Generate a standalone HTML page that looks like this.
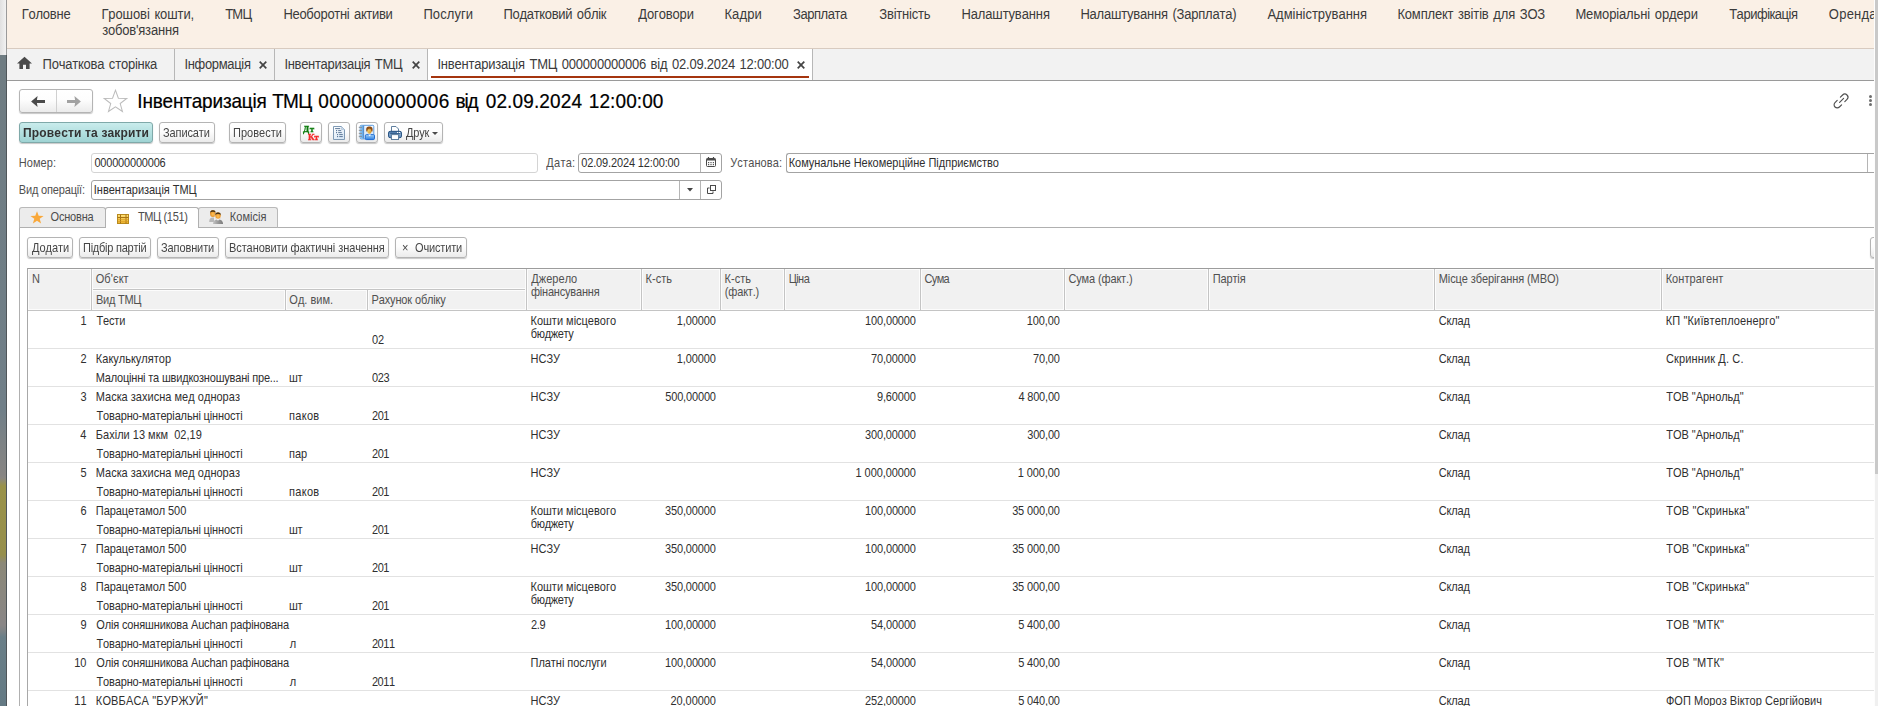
<!DOCTYPE html><html lang="uk"><head><meta charset="utf-8"><title>Інвентаризація ТМЦ</title><style>
*{box-sizing:border-box;margin:0;padding:0}
html,body{width:1878px;height:706px;overflow:hidden;background:#fff}
body{position:relative;font-family:"Liberation Sans",sans-serif;font-size:11px;color:#333;line-height:1}
.a{position:absolute}
.t{position:absolute;white-space:pre;line-height:1;font-kerning:none;transform-origin:0 84.65%;transform:scaleY(1.19)}
.m{font-size:13px;color:#3b3b3b;transform:scaleY(1.06);word-spacing:1.2px}
.c{font-size:11px;color:#2f2f2f}
.h{font-size:11px;color:#505050}
.b{font-size:11px;color:#4c4c4c}
.g{will-change:transform;color:#454545}
.btn{position:absolute;height:21px;border:1px solid #b4b4b4;border-radius:3px;background:linear-gradient(#ffffff 0%,#fdfdfd 45%,#ebebeb 100%);box-shadow:0 1px 1px rgba(0,0,0,.22)}
.inp{position:absolute;height:20px;border:1px solid #a3a3a3;border-radius:3px;background:#fff}
.hl{position:absolute;height:1px;background:#e2e2e2;left:28px;width:1846px}
</style></head><body>
<div class="a" style="left:0px;top:0px;width:6px;height:55px;background:linear-gradient(90deg,#e0e0e0,#f2f2f2)"></div>
<div class="a" style="left:0px;top:55px;width:6px;height:651px;background:linear-gradient(180deg,#6f7c82 0px,#707f88 355px,#7c8285 385px,#878583 420px,#8a8782 423px,#999249 431px,#968f4c 500px,#8b8878 508px,#898686 570px,#7d8386 576px,#6a7f88 582px,#647a84 651px)"></div>
<div class="a" style="left:6px;top:0px;width:1px;height:55px;background:#9a9a9a"></div>
<div class="a" style="left:6px;top:55px;width:1px;height:651px;background:#50565a"></div>
<div class="a" style="left:1875px;top:0px;width:3px;height:474px;background:#c9c9c9"></div>
<div class="a" style="left:1875px;top:474px;width:3px;height:232px;background:#f0f0f0"></div>
<div class="a" style="left:1874px;top:0px;width:1px;height:706px;background:#fdfdfd"></div>
<div class="a" style="left:7px;top:0px;width:1867px;height:48px;background:#faf0e6"></div>
<div class="a" style="left:7px;top:48px;width:1867px;height:1px;background:#d8cbc0"></div>
<div class="a" style="left:0;top:0;width:1874px;height:48px;overflow:hidden">
<span class="t m" style="left:21.78px;top:8.00px;letter-spacing:-0.259px;">Головне</span>
<span class="t m" style="left:101.38px;top:8.00px;letter-spacing:-0.085px;">Грошові кошти,</span>
<span class="t m" style="left:225.16px;top:8.00px;letter-spacing:-0.727px;">ТМЦ</span>
<span class="t m" style="left:283.38px;top:8.00px;letter-spacing:-0.291px;">Необоротні активи</span>
<span class="t m" style="left:423.40px;top:8.00px;letter-spacing:0.082px;">Послуги</span>
<span class="t m" style="left:503.40px;top:8.00px;letter-spacing:-0.283px;">Податковий облік</span>
<span class="t m" style="left:638.35px;top:8.00px;letter-spacing:-0.148px;">Договори</span>
<span class="t m" style="left:724.38px;top:8.00px;letter-spacing:0.147px;">Кадри</span>
<span class="t m" style="left:793.02px;top:8.00px;letter-spacing:-0.461px;">Зарплата</span>
<span class="t m" style="left:879.32px;top:8.00px;letter-spacing:-0.205px;">Звітність</span>
<span class="t m" style="left:961.38px;top:8.00px;letter-spacing:-0.117px;">Налаштування</span>
<span class="t m" style="left:1080.38px;top:8.00px;letter-spacing:-0.200px;">Налаштування (Зарплата)</span>
<span class="t m" style="left:1267.42px;top:8.00px;letter-spacing:-0.017px;">Адміністрування</span>
<span class="t m" style="left:1397.38px;top:8.00px;letter-spacing:-0.154px;">Комплект звітів для ЗОЗ</span>
<span class="t m" style="left:1575.38px;top:8.00px;letter-spacing:-0.118px;">Меморіальні ордери</span>
<span class="t m" style="left:1729.16px;top:8.00px;letter-spacing:-0.474px;">Тарифікація</span>
<span class="t m" style="left:1828.83px;top:8.00px;letter-spacing:0.230px;">Оренда</span>
<span class="t m" style="left:102.14px;top:24.00px;letter-spacing:-0.188px;">зобов'язання</span>
</div>
<div class="a" style="left:7px;top:49px;width:1867px;height:31px;background:#f2f2f2"></div>
<div class="a" style="left:7px;top:80px;width:1867px;height:1px;background:#9a9a9a"></div>
<div class="a" style="left:428px;top:49px;width:384px;height:31px;background:#fff"></div>
<div class="a" style="left:174px;top:49px;width:1px;height:31px;background:#b7b7b7"></div>
<div class="a" style="left:274px;top:49px;width:1px;height:31px;background:#b7b7b7"></div>
<div class="a" style="left:427px;top:49px;width:1px;height:31px;background:#b7b7b7"></div>
<div class="a" style="left:812px;top:49px;width:1px;height:31px;background:#b7b7b7"></div>
<div class="a" style="left:431px;top:76px;width:378px;height:2px;background:#a5350f"></div>
<svg class="a" style="left:16px;top:56px" width="17" height="14" viewBox="0 0 17 14"><path d="M8.5 0.8 L16 7.5 H13.6 V13 H10 V8.8 H7 V13 H3.4 V7.5 H1 Z" fill="#4a4a4a"/></svg>
<span class="t m" style="left:42.60px;top:58.00px;letter-spacing:-0.214px;">Початкова сторінка</span>
<span class="t m" style="left:184.45px;top:58.00px;letter-spacing:-0.332px;">Інформація</span>
<span class="t m" style="left:284.45px;top:58.00px;letter-spacing:-0.318px;">Інвентаризація ТМЦ</span>
<span class="t m" style="left:437.45px;top:58.00px;letter-spacing:-0.211px;">Інвентаризація ТМЦ 000000000006 від 02.09.2024 12:00:00</span>
<svg class="a" style="left:257.6px;top:60.2px" width="10" height="10" viewBox="0 0 10 10"><path d="M1.7 1.7 L8.3 8.3 M8.3 1.7 L1.7 8.3" stroke="#444" stroke-width="1.7" fill="none"/></svg>
<svg class="a" style="left:410.5px;top:60.2px" width="10" height="10" viewBox="0 0 10 10"><path d="M1.7 1.7 L8.3 8.3 M8.3 1.7 L1.7 8.3" stroke="#444" stroke-width="1.7" fill="none"/></svg>
<svg class="a" style="left:795.6px;top:60.2px" width="10" height="10" viewBox="0 0 10 10"><path d="M1.7 1.7 L8.3 8.3 M8.3 1.7 L1.7 8.3" stroke="#444" stroke-width="1.7" fill="none"/></svg>
<div class="btn" style="left:19px;top:89px;width:74px;height:24px"></div>
<div class="a" style="left:56px;top:90px;width:1px;height:22px;background:#d0d0d0"></div>
<svg class="a" style="left:30px;top:95px" width="16" height="13" viewBox="0 0 16 13"><path d="M1.1 6.5 L7.6 1.1 L6.9 5 H15 V8 H6.9 L7.6 11.9 Z" fill="#4a4a4a"/></svg>
<svg class="a" style="left:66px;top:95px" width="16" height="13" viewBox="0 0 16 13"><path d="M14.9 6.5 L8.4 1.1 L9.1 5 H1 V8 H9.1 L8.4 11.9 Z" fill="#a2a2a2"/></svg>
<svg class="a" style="left:102.1px;top:88.3px" width="28" height="27" viewBox="0 0 26 25"><path d="M12.5 2 L15.2 9.4 L23 9.6 L16.9 14.4 L19 21.8 L12.5 17.5 L6 21.8 L8.1 14.4 L2 9.6 L9.8 9.4 Z" fill="#fff" stroke="#bcbcbc" stroke-width="0.95" stroke-linejoin="miter"/></svg>
<span class="t c" style="left:137.30px;top:91.92px;font-size:19px;letter-spacing:-0.198px;color:#000;transform:scaleY(1.07);-webkit-text-stroke:0.2px #000;">Інвентаризація </span>
<span class="t c" style="left:272.32px;top:91.92px;font-size:19px;letter-spacing:-0.804px;color:#000;transform:scaleY(1.07);-webkit-text-stroke:0.2px #000;">ТМЦ </span>
<span class="t c" style="left:318.31px;top:91.92px;font-size:19px;letter-spacing:0.379px;color:#000;transform:scaleY(1.07);-webkit-text-stroke:0.2px #000;">000000000006 </span>
<span class="t c" style="left:455.53px;top:91.92px;font-size:19px;letter-spacing:-1.130px;color:#000;transform:scaleY(1.07);-webkit-text-stroke:0.2px #000;">від </span>
<span class="t c" style="left:485.71px;top:91.92px;font-size:19px;letter-spacing:0.134px;color:#000;transform:scaleY(1.07);-webkit-text-stroke:0.2px #000;">02.09.2024 </span>
<span class="t c" style="left:588.80px;top:91.92px;font-size:19px;letter-spacing:0.090px;color:#000;transform:scaleY(1.07);-webkit-text-stroke:0.2px #000;">12:00:00</span>
<svg class="a" style="left:1830.5px;top:90.5px" width="20" height="20" viewBox="0 0 20 20"><g fill="none" stroke="#4f4f4f" stroke-width="1.15" stroke-linecap="round"><path d="M8.6 11.4 L12.6 7.4"/><path d="M9.4 6.2 L11.6 4 a3.1 3.1 0 0 1 4.4 4.4 L13.8 10.6"/><path d="M10.6 13.8 L8.4 16 a3.1 3.1 0 0 1 -4.4 -4.4 L6.2 9.4"/></g></svg>
<div class="a" style="left:1869px;top:95px;width:3px;height:3px;background:#6e6e6e;border-radius:1.5px"></div>
<div class="a" style="left:1869px;top:99px;width:3px;height:3px;background:#6e6e6e;border-radius:1.5px"></div>
<div class="a" style="left:1869px;top:103px;width:3px;height:3px;background:#6e6e6e;border-radius:1.5px"></div>
<div class="btn" style="left:19px;top:122px;width:134px;height:21px;border-color:#7fa9a9;background:linear-gradient(#c9ecec 0%,#b4e0e0 50%,#9fd3d3 100%)"></div>
<span class="t b g" style="left:23.35px;top:126.84px;font-size:12px;font-weight:bold;letter-spacing:0.158px;color:#333;transform:none;">Провести та закрити</span>
<div class="btn" style="left:159px;top:122px;width:56px"></div>
<span class="t b g" style="left:163.39px;top:127.69px;letter-spacing:-0.106px;">Записати</span>
<div class="btn" style="left:229px;top:122px;width:57px"></div>
<span class="t b g" style="left:232.86px;top:127.69px;letter-spacing:0.024px;">Провести</span>
<div class="btn" style="left:300px;top:122px;width:22px"></div>
<span class="t c" style="left:303.20px;top:124.78px;font-size:9px;font-weight:bold;letter-spacing:0.450px;color:#0b7a0b;font-family:'Liberation Serif',serif;transform:none;will-change:transform;-webkit-text-stroke:0.35px currentColor;">Дт</span>
<span class="t c" style="left:307.90px;top:132.78px;font-size:9px;font-weight:bold;letter-spacing:-0.383px;color:#f52a2a;font-family:'Liberation Serif',serif;transform:none;will-change:transform;-webkit-text-stroke:0.35px currentColor;">Кт</span>
<div class="btn" style="left:328px;top:122px;width:22px"></div>
<svg class="a" style="left:333px;top:126px" width="12" height="14" viewBox="0 0 12 14"><defs><linearGradient id="dg" x1="0" y1="0" x2="0.6" y2="1"><stop offset="0" stop-color="#ffffff"/><stop offset="1" stop-color="#d9e8f6"/></linearGradient></defs><path d="M0.5 0.5 H8.5 L11.5 3.5 V13.5 H0.5 Z" fill="url(#dg)" stroke="#7f9ab5"/><path d="M8.5 0.5 V3.5 H11.5 Z" fill="#c9d8e8" stroke="#a9bdd3" stroke-width="0.6"/><path d="M2.5 2.6 H6.8 M5.6 4.6 H7.8 M5.6 6.6 H8.4 M6.6 8.6 H9.4 M6.6 10.6 H9.4" stroke="#4f6b8c" stroke-width="0.9" stroke-linecap="round"/><g fill="#3f6186"><circle cx="3.6" cy="4.6" r="0.6"/><circle cx="3.6" cy="6.6" r="0.6"/><circle cx="4.6" cy="8.6" r="0.6"/><circle cx="4.6" cy="10.6" r="0.6"/></g></svg>
<div class="btn" style="left:356px;top:122px;width:22px"></div>
<svg class="a" style="left:358px;top:124px" width="18" height="17" viewBox="0 0 18 17"><defs><linearGradient id="bk" x1="0" y1="0" x2="1" y2="0"><stop offset="0" stop-color="#8cc4f0"/><stop offset="1" stop-color="#5aa0e0"/></linearGradient><linearGradient id="sh" x1="0" y1="0" x2="0" y2="1"><stop offset="0" stop-color="#9fd0f8"/><stop offset="1" stop-color="#2f7fe0"/></linearGradient><linearGradient id="fc" x1="0" y1="0" x2="1" y2="1"><stop offset="0" stop-color="#ffe27a"/><stop offset="1" stop-color="#d08a20"/></linearGradient></defs><rect x="2.2" y="1.3" width="13.6" height="13.6" rx="1" fill="#f4f9ff" stroke="#4a90d9" stroke-width="0.9"/><rect x="2.6" y="1.7" width="3" height="12.8" fill="url(#bk)"/><rect x="5.3" y="1.7" width="0.9" height="12.8" fill="#3c7cc4"/><rect x="7.2" y="3.4" width="7.6" height="9" fill="#d6e8fb"/><g stroke="#8a8a8a" stroke-width="0.9" stroke-linecap="round"><path d="M1.2 3.4 H3.6"/><path d="M1.2 6.4 H3.6"/><path d="M1.2 9.4 H3.6"/><path d="M1.2 12.4 H3.6"/></g><path d="M8.4 7.6 C7.6 3.4 9.2 2.6 11.4 2.6 C13.6 2.6 15.2 3.6 14.4 7.6 Z" fill="#8c4a12"/><ellipse cx="11.4" cy="7.2" rx="2.1" ry="2.6" fill="url(#fc)"/><path d="M9.2 5.6 C9.8 4.2 13 4.2 13.6 5.6 C12.6 5 10.2 5 9.2 5.6 Z" fill="#9a5414"/><rect x="7.3" y="10.6" width="9.2" height="5" rx="1.2" fill="url(#sh)" stroke="#1565d0" stroke-width="0.9"/><path d="M10.2 10.4 L11.7 12.2 L13.2 10.4 Z" fill="#ffffff"/></svg>
<div class="btn" style="left:384px;top:122px;width:59px"></div>
<svg class="a" style="left:388px;top:126px" width="14" height="14" viewBox="0 0 14 14"><defs><linearGradient id="pb" x1="0" y1="0" x2="0" y2="1"><stop offset="0" stop-color="#3d6a9c"/><stop offset="0.5" stop-color="#7da2cb"/><stop offset="1" stop-color="#5682b2"/></linearGradient></defs><path d="M3.5 5.5 V0.5 H8 L10.5 3 V5.5 Z" fill="#fff" stroke="#5f7f9f"/><rect x="0.5" y="5.3" width="13" height="6.4" rx="1.6" fill="url(#pb)" stroke="#2d5886"/><path d="M2.2 7.6 H11.8" stroke="#2d5886" stroke-width="0.9"/><rect x="9" y="6" width="1.2" height="1" fill="#fff"/><rect x="11" y="6" width="1.2" height="1" fill="#fff"/><rect x="3.5" y="8.6" width="7" height="4.9" fill="#fff" stroke="#5f7f9f"/></svg>
<span class="t b g" style="left:405.87px;top:127.69px;letter-spacing:-0.218px;">Друк</span>
<svg class="a" style="left:432px;top:132px" width="6" height="3" viewBox="0 0 6 3"><path d="M0 0 H6 L3 3 Z" fill="#4a4a4a"/></svg>
<span class="t h" style="left:18.75px;top:157.69px;letter-spacing:0.078px;">Номер:</span>
<div class="inp" style="left:91px;top:153px;width:447px;border-color:#d4d4d4"></div>
<span class="t c" style="left:94.42px;top:157.69px;letter-spacing:-0.191px;">000000000006</span>
<span class="t h" style="left:546.37px;top:157.69px;letter-spacing:0.226px;">Дата:</span>
<div class="inp" style="left:578px;top:153px;width:144px"></div>
<div class="a" style="left:700px;top:154px;width:1px;height:18px;background:#b5b5b5"></div>
<span class="t c" style="left:581.22px;top:157.69px;letter-spacing:-0.137px;">02.09.2024 12:00:00</span>
<svg class="a" style="left:706px;top:157px" width="10" height="10" viewBox="0 0 10 10"><rect x="0.5" y="1.5" width="9" height="8" rx="1" fill="#fff" stroke="#4a4a4a"/><rect x="0.5" y="1.5" width="9" height="2" fill="#4a4a4a"/><path d="M2.5 0 V2.5 M7.5 0 V2.5" stroke="#4a4a4a" stroke-width="1.2"/><g fill="#555"><rect x="2" y="5" width="1.2" height="1.2"/><rect x="4.4" y="5" width="1.2" height="1.2"/><rect x="6.8" y="5" width="1.2" height="1.2"/><rect x="2" y="7" width="1.2" height="1.2"/><rect x="4.4" y="7" width="1.2" height="1.2"/><rect x="6.8" y="7" width="1.2" height="1.2"/></g></svg>
<span class="t h" style="left:730.25px;top:157.69px;letter-spacing:0.131px;">Установа:</span>
<div class="inp" style="left:786px;top:153px;width:1088px;border-right:none;border-radius:3px 0 0 3px"></div>
<div class="a" style="left:1867px;top:154px;width:1px;height:18px;background:#b5b5b5"></div>
<span class="t c" style="left:788.65px;top:157.69px;letter-spacing:-0.012px;">Комунальне Некомерційне Підприємство</span>
<span class="t h" style="left:18.75px;top:184.69px;letter-spacing:-0.161px;">Вид операції:</span>
<div class="inp" style="left:91px;top:180px;width:631px"></div>
<div class="a" style="left:679px;top:181px;width:1px;height:18px;background:#b5b5b5"></div>
<div class="a" style="left:700px;top:181px;width:1px;height:18px;background:#b5b5b5"></div>
<span class="t c" style="left:93.83px;top:184.69px;letter-spacing:-0.041px;">Інвентаризація ТМЦ</span>
<svg class="a" style="left:686.5px;top:188px" width="6" height="4" viewBox="0 0 6 4"><path d="M0 0 H6 L3 3.5 Z" fill="#444"/></svg>
<svg class="a" style="left:707px;top:185px" width="9" height="9" viewBox="0 0 9 9"><rect x="3.5" y="0.5" width="5" height="5" fill="none" stroke="#4a4a4a"/><path d="M2.6 3 H0.5 V8.5 H6 V6.4" fill="none" stroke="#4a4a4a"/></svg>
<div class="a" style="left:19px;top:227px;width:1855px;height:1px;background:#b0b0b0"></div>
<div class="a" style="left:19px;top:227px;width:1px;height:479px;background:#b0b0b0"></div>
<div class="a" style="left:19px;top:207px;width:87px;height:21px;border:1px solid #b9b9b9;border-bottom-color:#b0b0b0;border-radius:3px 3px 0 0;background:#ececec"></div>
<div class="a" style="left:198px;top:207px;width:80px;height:21px;border:1px solid #b9b9b9;border-bottom-color:#b0b0b0;border-radius:3px 3px 0 0;background:#ececec"></div>
<div class="a" style="left:105px;top:207px;width:94px;height:21px;border:1px solid #b0b0b0;border-bottom:none;border-radius:3px 3px 0 0;background:#fff"></div>
<svg class="a" style="left:30px;top:210.5px" width="14" height="13" viewBox="0 0 14 13"><path d="M7 0.3 L8.7 4.8 L13.6 4.9 L9.7 7.8 L11.1 12.5 L7 9.7 L2.9 12.5 L4.3 7.8 L0.4 4.9 L5.3 4.8 Z" fill="#f9a83a"/></svg>
<span class="t b" style="left:50.53px;top:211.69px;letter-spacing:-0.194px;">Основна</span>
<svg class="a" style="left:117px;top:214px" width="12" height="10" viewBox="0 0 12 10"><defs><linearGradient id="tg" x1="0" y1="0" x2="0" y2="1"><stop offset="0" stop-color="#ffe27a"/><stop offset="1" stop-color="#eab02a"/></linearGradient></defs><rect x="0.5" y="0.5" width="11" height="9" fill="url(#tg)" stroke="#b98a1e"/><path d="M3.5 0.5 V9.5 M9 0.5 V9.5 M0.5 3.5 H11.5" stroke="#a87414" stroke-width="1"/><path d="M1 5.5 H11 M1 7.5 H11" stroke="#d69a22" stroke-width="0.6"/></svg>
<span class="t b" style="left:137.90px;top:211.69px;letter-spacing:-0.353px;">ТМЦ (151)</span>
<svg class="a" style="left:208px;top:209px" width="16" height="16" viewBox="0 0 16 16"><defs><radialGradient id="hd" cx="0.5" cy="0.6" r="0.6"><stop offset="0" stop-color="#ffc45a"/><stop offset="0.7" stop-color="#e8952a"/><stop offset="1" stop-color="#8a5a1a"/></radialGradient><linearGradient id="bd" x1="0" y1="0" x2="1" y2="0"><stop offset="0" stop-color="#c4c4c4"/><stop offset="0.5" stop-color="#9a9a9a"/><stop offset="1" stop-color="#7c7c7c"/></linearGradient></defs><path d="M1.2 13 C1.2 9.8 2.6 8.6 4.8 8.6 L6 8.6 L6 13 Z" fill="#b8b8b8"/><ellipse cx="4.9" cy="4.4" rx="2.8" ry="3.5" fill="url(#hd)"/><path d="M2.2 3.6 C2.6 0.6 7.2 0.6 7.6 3.6 C6.4 2.4 3.4 2.4 2.2 3.6 Z" fill="#4a3414"/><path d="M5 15 C5 11.6 7 10.4 10 10.4 C13 10.4 15 11.6 15 15 Z" fill="url(#bd)"/><path d="M8.6 10.3 L10 11.8 L11.4 10.3 Z" fill="#fff"/><ellipse cx="10" cy="6.5" rx="3.1" ry="3.6" fill="url(#hd)" stroke="#f4f4f4" stroke-width="0.5"/><path d="M7 5.8 C7.4 2.6 12.6 2.6 13 5.8 C11.6 4.6 8.4 4.6 7 5.8 Z" fill="#4a3414"/></svg>
<span class="t b" style="left:229.75px;top:211.69px;letter-spacing:0.055px;">Комісія</span>
<div class="btn" style="left:27px;top:237px;width:46px"></div>
<span class="t b g" style="left:31.57px;top:242.69px;letter-spacing:-0.009px;">Додати</span>
<div class="btn" style="left:79px;top:237px;width:72px"></div>
<span class="t b g" style="left:83.16px;top:242.69px;letter-spacing:-0.238px;">Підбір партій</span>
<div class="btn" style="left:157px;top:237px;width:62px"></div>
<span class="t b g" style="left:161.29px;top:242.69px;letter-spacing:-0.107px;">Заповнити</span>
<div class="btn" style="left:225px;top:237px;width:164px"></div>
<span class="t b g" style="left:228.95px;top:242.69px;letter-spacing:-0.085px;">Встановити фактичні значення</span>
<div class="btn" style="left:395px;top:237px;width:72px"></div>
<span class="t b g" style="left:415.33px;top:242.69px;letter-spacing:-0.159px;">Очистити</span>
<span class="t b g" style="left:401.89px;top:242.69px;font-size:11px;">×</span>
<div class="a" style="left:1860px;top:230px;width:14px;height:36px;overflow:hidden"><div class="btn" style="left:10px;top:7px;width:12px"></div></div>
<div class="a" style="left:27px;top:268px;width:1847px;height:43px;background:#f1f1f1"></div>
<div class="a" style="left:27px;top:268px;width:1847px;height:1px;background:#9c9c9c"></div>
<div class="a" style="left:28px;top:269px;width:1846px;height:1px;background:#fcfcfc"></div>
<div class="a" style="left:28px;top:309px;width:1846px;height:1px;background:#fcfcfc"></div>
<div class="a" style="left:27px;top:310px;width:1847px;height:1px;background:#c4c4c4"></div>
<div class="a" style="left:27px;top:268px;width:1px;height:438px;background:#a8a8a8"></div>
<div class="a" style="left:28px;top:269px;width:1px;height:41px;background:#fcfcfc"></div>
<div class="a" style="left:92px;top:288px;width:434px;height:3px;background:#fcfcfc"></div>
<div class="a" style="left:92px;top:289px;width:434px;height:1px;background:#c4c4c4"></div>
<div class="a" style="left:90px;top:269px;width:3px;height:41px;background:#fcfcfc"></div>
<div class="a" style="left:91px;top:269px;width:1px;height:41px;background:#c4c4c4"></div>
<div class="a" style="left:525px;top:269px;width:3px;height:41px;background:#fcfcfc"></div>
<div class="a" style="left:526px;top:269px;width:1px;height:41px;background:#c4c4c4"></div>
<div class="a" style="left:640px;top:269px;width:3px;height:41px;background:#fcfcfc"></div>
<div class="a" style="left:641px;top:269px;width:1px;height:41px;background:#c4c4c4"></div>
<div class="a" style="left:719px;top:269px;width:3px;height:41px;background:#fcfcfc"></div>
<div class="a" style="left:720px;top:269px;width:1px;height:41px;background:#c4c4c4"></div>
<div class="a" style="left:783px;top:269px;width:3px;height:41px;background:#fcfcfc"></div>
<div class="a" style="left:784px;top:269px;width:1px;height:41px;background:#c4c4c4"></div>
<div class="a" style="left:919px;top:269px;width:3px;height:41px;background:#fcfcfc"></div>
<div class="a" style="left:920px;top:269px;width:1px;height:41px;background:#c4c4c4"></div>
<div class="a" style="left:1063px;top:269px;width:3px;height:41px;background:#fcfcfc"></div>
<div class="a" style="left:1064px;top:269px;width:1px;height:41px;background:#c4c4c4"></div>
<div class="a" style="left:1207px;top:269px;width:3px;height:41px;background:#fcfcfc"></div>
<div class="a" style="left:1208px;top:269px;width:1px;height:41px;background:#c4c4c4"></div>
<div class="a" style="left:1433px;top:269px;width:3px;height:41px;background:#fcfcfc"></div>
<div class="a" style="left:1434px;top:269px;width:1px;height:41px;background:#c4c4c4"></div>
<div class="a" style="left:1660px;top:269px;width:3px;height:41px;background:#fcfcfc"></div>
<div class="a" style="left:1661px;top:269px;width:1px;height:41px;background:#c4c4c4"></div>
<div class="a" style="left:284px;top:290px;width:3px;height:20px;background:#fcfcfc"></div>
<div class="a" style="left:285px;top:290px;width:1px;height:20px;background:#c4c4c4"></div>
<div class="a" style="left:366px;top:290px;width:3px;height:20px;background:#fcfcfc"></div>
<div class="a" style="left:367px;top:290px;width:1px;height:20px;background:#c4c4c4"></div>
<span class="t h" style="left:32.05px;top:273.69px;">N</span>
<span class="t h" style="left:95.63px;top:273.69px;letter-spacing:0.118px;">Об'єкт</span>
<span class="t h" style="left:96.05px;top:294.69px;letter-spacing:-0.262px;">Вид ТМЦ</span>
<span class="t h" style="left:289.33px;top:294.69px;letter-spacing:0.019px;">Од. вим.</span>
<span class="t h" style="left:371.55px;top:294.69px;letter-spacing:-0.145px;">Рахунок обліку</span>
<span class="t h" style="left:531.37px;top:273.69px;letter-spacing:0.024px;">Джерело</span>
<span class="t h" style="left:530.99px;top:286.69px;letter-spacing:-0.200px;">фінансування</span>
<span class="t h" style="left:645.55px;top:273.69px;letter-spacing:0.053px;">К-сть</span>
<span class="t h" style="left:724.55px;top:273.69px;letter-spacing:0.028px;">К-сть</span>
<span class="t h" style="left:724.77px;top:286.69px;letter-spacing:-0.156px;">(факт.)</span>
<span class="t h" style="left:788.65px;top:273.69px;letter-spacing:-0.557px;">Ціна</span>
<span class="t h" style="left:924.39px;top:273.69px;letter-spacing:-0.588px;">Сума</span>
<span class="t h" style="left:1068.39px;top:273.69px;letter-spacing:-0.122px;">Сума (факт.)</span>
<span class="t h" style="left:1212.76px;top:273.69px;letter-spacing:-0.145px;">Партія</span>
<span class="t h" style="left:1438.75px;top:273.69px;letter-spacing:-0.095px;">Місце зберігання (МВО)</span>
<span class="t h" style="left:1665.65px;top:273.69px;letter-spacing:0.064px;">Контрагент</span>
<span class="t c" style="left:80.47px;top:315.69px;">1</span>
<span class="t c" style="left:96.50px;top:315.69px;letter-spacing:-0.177px;">Тести</span>
<span class="t c" style="left:372.02px;top:334.69px;letter-spacing:-0.152px;">02</span>
<span class="t c" style="left:530.55px;top:315.69px;letter-spacing:-0.010px;">Кошти місцевого</span>
<span class="t c" style="left:530.81px;top:328.69px;letter-spacing:-0.336px;">бюджету</span>
<span class="t c" style="left:676.81px;top:315.69px;letter-spacing:-0.099px;">1,00000</span>
<span class="t c" style="left:865.01px;top:315.69px;letter-spacing:-0.129px;">100,00000</span>
<span class="t c" style="left:1026.81px;top:315.69px;letter-spacing:-0.095px;">100,00</span>
<span class="t c" style="left:1438.69px;top:315.69px;letter-spacing:-0.116px;">Склад</span>
<span class="t c" style="left:1665.65px;top:315.69px;letter-spacing:0.154px;">КП "Київтеплоенерго"</span>
<div class="hl" style="top:348px"></div>
<span class="t c" style="left:80.49px;top:353.69px;">2</span>
<span class="t c" style="left:95.85px;top:353.69px;letter-spacing:0.026px;">Какулькулятор</span>
<span class="t c" style="left:95.85px;top:372.69px;letter-spacing:-0.183px;">Малоцінні та швидкозношувані пре...</span>
<span class="t c" style="left:289.09px;top:372.69px;letter-spacing:-0.412px;">шт</span>
<span class="t c" style="left:372.02px;top:372.69px;letter-spacing:-0.320px;">023</span>
<span class="t c" style="left:530.55px;top:353.69px;letter-spacing:-0.024px;">НСЗУ</span>
<span class="t c" style="left:676.81px;top:353.69px;letter-spacing:-0.099px;">1,00000</span>
<span class="t c" style="left:870.89px;top:353.69px;letter-spacing:-0.112px;">70,00000</span>
<span class="t c" style="left:1032.89px;top:353.69px;letter-spacing:-0.108px;">70,00</span>
<span class="t c" style="left:1438.69px;top:353.69px;letter-spacing:-0.116px;">Склад</span>
<span class="t c" style="left:1665.99px;top:353.69px;letter-spacing:0.132px;">Скринник Д. С.</span>
<div class="hl" style="top:386px"></div>
<span class="t c" style="left:80.42px;top:391.69px;">3</span>
<span class="t c" style="left:95.85px;top:391.69px;letter-spacing:0.026px;">Маска захисна мед однораз</span>
<span class="t c" style="left:96.50px;top:410.69px;letter-spacing:-0.145px;">Товарно-матеріальні цінності</span>
<span class="t c" style="left:289.09px;top:410.69px;letter-spacing:0.323px;">паков</span>
<span class="t c" style="left:371.90px;top:410.69px;letter-spacing:-0.381px;">201</span>
<span class="t c" style="left:530.55px;top:391.69px;letter-spacing:-0.024px;">НСЗУ</span>
<span class="t c" style="left:665.21px;top:391.69px;letter-spacing:-0.153px;">500,00000</span>
<span class="t c" style="left:876.93px;top:391.69px;letter-spacing:-0.119px;">9,60000</span>
<span class="t c" style="left:1018.40px;top:391.69px;letter-spacing:-0.177px;">4 800,00</span>
<span class="t c" style="left:1438.69px;top:391.69px;letter-spacing:-0.116px;">Склад</span>
<span class="t c" style="left:1666.30px;top:391.69px;letter-spacing:-0.032px;">ТОВ "Арнольд"</span>
<div class="hl" style="top:424px"></div>
<span class="t c" style="left:80.25px;top:429.69px;">4</span>
<span class="t c" style="left:95.85px;top:429.69px;letter-spacing:0.008px;">Бахіли 13 мкм  02,19</span>
<span class="t c" style="left:96.50px;top:448.69px;letter-spacing:-0.145px;">Товарно-матеріальні цінності</span>
<span class="t c" style="left:289.09px;top:448.69px;letter-spacing:-0.034px;">пар</span>
<span class="t c" style="left:371.90px;top:448.69px;letter-spacing:-0.381px;">201</span>
<span class="t c" style="left:530.55px;top:429.69px;letter-spacing:-0.024px;">НСЗУ</span>
<span class="t c" style="left:864.93px;top:429.69px;letter-spacing:-0.119px;">300,00000</span>
<span class="t c" style="left:1027.23px;top:429.69px;letter-spacing:-0.179px;">300,00</span>
<span class="t c" style="left:1438.69px;top:429.69px;letter-spacing:-0.116px;">Склад</span>
<span class="t c" style="left:1666.30px;top:429.69px;letter-spacing:-0.032px;">ТОВ "Арнольд"</span>
<div class="hl" style="top:462px"></div>
<span class="t c" style="left:80.39px;top:467.69px;">5</span>
<span class="t c" style="left:95.85px;top:467.69px;letter-spacing:0.026px;">Маска захисна мед однораз</span>
<span class="t c" style="left:96.50px;top:486.69px;letter-spacing:-0.145px;">Товарно-матеріальні цінності</span>
<span class="t c" style="left:289.09px;top:486.69px;letter-spacing:0.323px;">паков</span>
<span class="t c" style="left:371.90px;top:486.69px;letter-spacing:-0.381px;">201</span>
<span class="t c" style="left:530.55px;top:467.69px;letter-spacing:-0.024px;">НСЗУ</span>
<span class="t c" style="left:855.61px;top:467.69px;letter-spacing:-0.080px;">1 000,00000</span>
<span class="t c" style="left:1017.81px;top:467.69px;letter-spacing:-0.093px;">1 000,00</span>
<span class="t c" style="left:1438.69px;top:467.69px;letter-spacing:-0.116px;">Склад</span>
<span class="t c" style="left:1666.30px;top:467.69px;letter-spacing:-0.032px;">ТОВ "Арнольд"</span>
<div class="hl" style="top:500px"></div>
<span class="t c" style="left:80.42px;top:505.69px;">6</span>
<span class="t c" style="left:95.86px;top:505.69px;letter-spacing:-0.066px;">Парацетамол 500</span>
<span class="t c" style="left:96.50px;top:524.69px;letter-spacing:-0.145px;">Товарно-матеріальні цінності</span>
<span class="t c" style="left:289.09px;top:524.69px;letter-spacing:-0.412px;">шт</span>
<span class="t c" style="left:371.90px;top:524.69px;letter-spacing:-0.381px;">201</span>
<span class="t c" style="left:530.55px;top:505.69px;letter-spacing:-0.010px;">Кошти місцевого</span>
<span class="t c" style="left:530.81px;top:518.69px;letter-spacing:-0.336px;">бюджету</span>
<span class="t c" style="left:664.93px;top:505.69px;letter-spacing:-0.119px;">350,00000</span>
<span class="t c" style="left:865.01px;top:505.69px;letter-spacing:-0.129px;">100,00000</span>
<span class="t c" style="left:1012.13px;top:505.69px;letter-spacing:-0.136px;">35 000,00</span>
<span class="t c" style="left:1438.69px;top:505.69px;letter-spacing:-0.116px;">Склад</span>
<span class="t c" style="left:1666.30px;top:505.69px;letter-spacing:0.129px;">ТОВ "Скринька"</span>
<div class="hl" style="top:538px"></div>
<span class="t c" style="left:80.49px;top:543.69px;">7</span>
<span class="t c" style="left:95.86px;top:543.69px;letter-spacing:-0.066px;">Парацетамол 500</span>
<span class="t c" style="left:96.50px;top:562.69px;letter-spacing:-0.145px;">Товарно-матеріальні цінності</span>
<span class="t c" style="left:289.09px;top:562.69px;letter-spacing:-0.412px;">шт</span>
<span class="t c" style="left:371.90px;top:562.69px;letter-spacing:-0.381px;">201</span>
<span class="t c" style="left:530.55px;top:543.69px;letter-spacing:-0.024px;">НСЗУ</span>
<span class="t c" style="left:664.93px;top:543.69px;letter-spacing:-0.119px;">350,00000</span>
<span class="t c" style="left:865.01px;top:543.69px;letter-spacing:-0.129px;">100,00000</span>
<span class="t c" style="left:1012.13px;top:543.69px;letter-spacing:-0.136px;">35 000,00</span>
<span class="t c" style="left:1438.69px;top:543.69px;letter-spacing:-0.116px;">Склад</span>
<span class="t c" style="left:1666.30px;top:543.69px;letter-spacing:0.129px;">ТОВ "Скринька"</span>
<div class="hl" style="top:576px"></div>
<span class="t c" style="left:80.41px;top:581.69px;">8</span>
<span class="t c" style="left:95.86px;top:581.69px;letter-spacing:-0.066px;">Парацетамол 500</span>
<span class="t c" style="left:96.50px;top:600.69px;letter-spacing:-0.145px;">Товарно-матеріальні цінності</span>
<span class="t c" style="left:289.09px;top:600.69px;letter-spacing:-0.412px;">шт</span>
<span class="t c" style="left:371.90px;top:600.69px;letter-spacing:-0.381px;">201</span>
<span class="t c" style="left:530.55px;top:581.69px;letter-spacing:-0.010px;">Кошти місцевого</span>
<span class="t c" style="left:530.81px;top:594.69px;letter-spacing:-0.336px;">бюджету</span>
<span class="t c" style="left:664.93px;top:581.69px;letter-spacing:-0.119px;">350,00000</span>
<span class="t c" style="left:865.01px;top:581.69px;letter-spacing:-0.129px;">100,00000</span>
<span class="t c" style="left:1012.13px;top:581.69px;letter-spacing:-0.136px;">35 000,00</span>
<span class="t c" style="left:1438.69px;top:581.69px;letter-spacing:-0.116px;">Склад</span>
<span class="t c" style="left:1666.30px;top:581.69px;letter-spacing:0.129px;">ТОВ "Скринька"</span>
<div class="hl" style="top:614px"></div>
<span class="t c" style="left:80.45px;top:619.69px;">9</span>
<span class="t c" style="left:96.23px;top:619.69px;letter-spacing:-0.139px;">Олія соняшникова Auchan рафінована</span>
<span class="t c" style="left:96.50px;top:638.69px;letter-spacing:-0.145px;">Товарно-матеріальні цінності</span>
<span class="t c" style="left:289.79px;top:638.69px;">л</span>
<span class="t c" style="left:371.90px;top:638.69px;letter-spacing:-0.427px;">2011</span>
<span class="t c" style="left:530.90px;top:619.69px;letter-spacing:-0.259px;">2.9</span>
<span class="t c" style="left:665.01px;top:619.69px;letter-spacing:-0.129px;">100,00000</span>
<span class="t c" style="left:871.11px;top:619.69px;letter-spacing:-0.144px;">54,00000</span>
<span class="t c" style="left:1018.21px;top:619.69px;letter-spacing:-0.150px;">5 400,00</span>
<span class="t c" style="left:1438.69px;top:619.69px;letter-spacing:-0.116px;">Склад</span>
<span class="t c" style="left:1666.30px;top:619.69px;letter-spacing:0.243px;">ТОВ "МТК"</span>
<div class="hl" style="top:652px"></div>
<span class="t c" style="left:74.24px;top:657.69px;">10</span>
<span class="t c" style="left:96.23px;top:657.69px;letter-spacing:-0.139px;">Олія соняшникова Auchan рафінована</span>
<span class="t c" style="left:96.50px;top:676.69px;letter-spacing:-0.145px;">Товарно-матеріальні цінності</span>
<span class="t c" style="left:289.79px;top:676.69px;">л</span>
<span class="t c" style="left:371.90px;top:676.69px;letter-spacing:-0.427px;">2011</span>
<span class="t c" style="left:530.56px;top:657.69px;letter-spacing:-0.042px;">Платні послуги</span>
<span class="t c" style="left:665.01px;top:657.69px;letter-spacing:-0.129px;">100,00000</span>
<span class="t c" style="left:871.11px;top:657.69px;letter-spacing:-0.144px;">54,00000</span>
<span class="t c" style="left:1018.21px;top:657.69px;letter-spacing:-0.150px;">5 400,00</span>
<span class="t c" style="left:1438.69px;top:657.69px;letter-spacing:-0.116px;">Склад</span>
<span class="t c" style="left:1666.30px;top:657.69px;letter-spacing:0.243px;">ТОВ "МТК"</span>
<div class="hl" style="top:690px"></div>
<span class="t c" style="left:74.35px;top:695.69px;">11</span>
<span class="t c" style="left:95.85px;top:695.69px;letter-spacing:0.158px;">КОВБАСА "БУРЖУЙ"</span>
<span class="t c" style="left:96.50px;top:714.69px;letter-spacing:-0.145px;">Товарно-матеріальні цінності</span>
<span class="t c" style="left:289.09px;top:714.69px;letter-spacing:-0.412px;">шт</span>
<span class="t c" style="left:371.90px;top:714.69px;letter-spacing:-0.427px;">2011</span>
<span class="t c" style="left:530.55px;top:695.69px;letter-spacing:-0.024px;">НСЗУ</span>
<span class="t c" style="left:670.50px;top:695.69px;letter-spacing:-0.057px;">20,00000</span>
<span class="t c" style="left:864.90px;top:695.69px;letter-spacing:-0.114px;">252,00000</span>
<span class="t c" style="left:1018.21px;top:695.69px;letter-spacing:-0.150px;">5 040,00</span>
<span class="t c" style="left:1438.69px;top:695.69px;letter-spacing:-0.116px;">Склад</span>
<span class="t c" style="left:1665.92px;top:695.69px;letter-spacing:0.041px;">ФОП Мороз Віктор Сергійович</span>
</body></html>
